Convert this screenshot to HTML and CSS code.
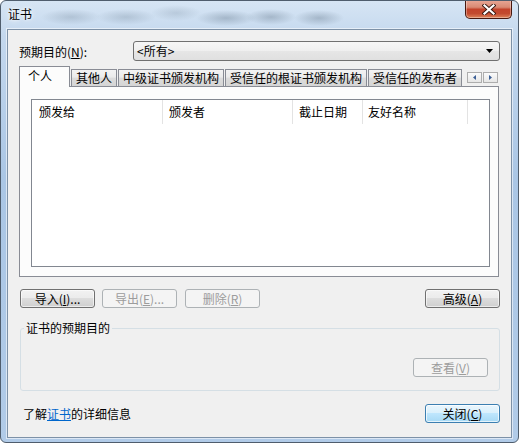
FILE: index.html
```html
<!DOCTYPE html>
<html lang="zh-CN">
<head>
    <meta charset="UTF-8">
    <title>证书</title>
    <link rel="stylesheet" href="styles.css">
</head>
<body>

<div class="window">
    <div class="titlebar">
        <span class="title">证书</span>
        <div class="close-btn">
            <svg width="14" height="11" viewBox="0 0 14 11">
                <path d="M2.5 1.5 L11.5 9.5 M11.5 1.5 L2.5 9.5" stroke="#3b1a12" stroke-width="4" stroke-linecap="square"/>
                <path d="M2.5 1.5 L11.5 9.5 M11.5 1.5 L2.5 9.5" stroke="#fff" stroke-width="2.2" stroke-linecap="square"/>
            </svg>
        </div>
    </div>

    <div class="client">
        <div class="purpose-row">
            <span class="purpose-label">预期目的(<u>N</u>):</span>
            <div class="combo">
                <span>&lt;所有&gt;</span>
                <svg width="7" height="4" viewBox="0 0 7 4"><path d="M0 0 H7 L3.5 4 Z" fill="#000"/></svg>
            </div>
        </div>

        <div class="tabs">
            <div class="tab active">个人</div>
            <div class="tab">其他人</div>
            <div class="tab">中级证书颁发机构</div>
            <div class="tab">受信任的根证书颁发机构</div>
            <div class="tab">受信任的发布者</div>
            <div class="tab-scroll">
                <span class="scroll-btn"><svg width="3" height="5" viewBox="0 0 3 5"><path d="M3 0 V5 L0 2.5 Z" fill="#3c5f95"/></svg></span>
                <span class="scroll-btn"><svg width="3" height="5" viewBox="0 0 3 5"><path d="M0 0 V5 L3 2.5 Z" fill="#3c5f95"/></svg></span>
            </div>
        </div>

        <div class="tab-panel">
            <div class="listview">
                <div class="lv-header">
                    <div class="col col-to">颁发给</div>
                    <div class="col col-by">颁发者</div>
                    <div class="col col-date">截止日期</div>
                    <div class="col col-name">友好名称</div>
                </div>
            </div>
        </div>

        <div class="button-row">
            <button class="btn">导入(<u>I</u>)...</button>
            <button class="btn" disabled>导出(<u>E</u>)...</button>
            <button class="btn" disabled>删除(<u>R</u>)</button>
            <button class="btn advanced">高级(<u>A</u>)</button>
        </div>

        <fieldset class="group">
            <legend>证书的预期目的</legend>
            <div class="group-body">
                <button class="btn" disabled>查看(<u>V</u>)</button>
            </div>
        </fieldset>

        <div class="footer">
            <span class="info">了解<a href="#" class="link">证书</a>的详细信息</span>
            <button class="btn default">关闭(<u>C</u>)</button>
        </div>
    </div>
</div>

</body>
</html>
```

FILE: styles.css
```css
* { box-sizing: border-box; }
body {
    margin: 0;
    font-family: "Noto Sans CJK SC", "Liberation Sans", sans-serif;
    font-size: 12px;
    color: #000;
}

/* window frame */
.window {
    width: 519px;
    height: 443px;
    border: 1px solid #4f5d6d;
    border-radius: 6px;
    overflow: hidden;
    display: flex;
    flex-direction: column;
    background:
        radial-gradient(ellipse 30px 8px at 70px 16px, rgba(90,110,130,0.25), transparent),
        radial-gradient(ellipse 30px 8px at 125px 16px, rgba(90,110,130,0.25), transparent),
        radial-gradient(ellipse 25px 8px at 175px 12px, rgba(90,110,130,0.2), transparent),
        radial-gradient(ellipse 30px 8px at 225px 17px, rgba(70,90,110,0.3), transparent),
        radial-gradient(ellipse 25px 8px at 270px 16px, rgba(70,90,110,0.3), transparent),
        radial-gradient(ellipse 25px 8px at 318px 17px, rgba(70,90,110,0.3), transparent),
        linear-gradient(180deg, #d6e5f4 0%, #c4d8ee 8%, #aac6e5 40%, #b1cbe8 100%);
}
.titlebar {
    height: 28px;
    display: flex;
    justify-content: space-between;
    align-items: flex-start;
}
.title {
    margin: 6px 0 0 7px;
    line-height: 14px;
    text-shadow: 0 0 6px #fff, 0 0 3px #fff;
}
.close-btn {
    width: 47px;
    height: 19px;
    margin: -1px 6px 0 0;
    border: 1px solid #47180f;
    border-top: none;
    border-radius: 0 0 5px 5px;
    display: flex;
    align-items: center;
    justify-content: center;
    background: linear-gradient(180deg, #e9a897 0%, #d98a74 40%, #c3432b 52%, #c24a2f 75%, #de8359 100%);
    box-shadow: inset 0 0 0 1px rgba(255,255,255,0.35);
}

/* client area */
.client {
    height: 409px;
    margin: 0 6px;
    border: 1px solid #7d91a7;
    box-shadow: 0 0 0 1px rgba(255,255,255,0.55);
    background: #f0f0f0;
    padding: 11px 11px 14px 11px;
}

.purpose-row {
    display: flex;
    align-items: center;
    height: 20px;
}
.purpose-label {
    width: 114px;
    line-height: 14px;
    padding-top: 2px;
}
.combo {
    flex: 1;
    height: 20px;
    border: 1px solid #707070;
    border-radius: 3px;
    display: flex;
    align-items: center;
    justify-content: space-between;
    padding: 0 6px 0 3px;
    line-height: 14px;
    background: linear-gradient(180deg, #f6f6f6 0%, #efefef 50%, #e6e6e6 51%, #e0e0e0 100%);
}

/* tabs */
.tabs {
    display: flex;
    align-items: flex-end;
    height: 20px;
    margin-top: 5px;
}
.tab {
    height: 17px;
    padding: 0 4px;
    margin-right: 1px;
    border: 1px solid #898c95;
    border-bottom: none;
    line-height: 16px;
    white-space: nowrap;
    background: linear-gradient(180deg, #f3f3f3 0%, #ebebeb 45%, #dcdcdc 50%, #d5d5d5 100%);
}
.tab.active {
    width: 51px;
    height: 21px;
    margin-bottom: -1px;
    padding: 0 0 0 8px;
    line-height: 17px;
    background: #fcfcfc;
    position: relative;
    z-index: 1;
}
.tab-scroll {
    display: flex;
    gap: 1px;
    margin: 6px 2px 0 auto;
    align-self: flex-start;
}
.scroll-btn {
    width: 15px;
    height: 11px;
    border: 1px solid #adadad;
    display: flex;
    align-items: center;
    justify-content: center;
    background: linear-gradient(180deg, #fbfbfb, #e6e6e6);
}

.tab-panel {
    height: 191px;
    margin-right: 1px;
    border: 1px solid #898c95;
    background: #fcfcfc;
    padding: 12px 8px 9px 11px;
}
.listview {
    height: 168px;
    border: 1px solid #828790;
    background: #fff;
}
.lv-header {
    display: flex;
    height: 24px;
}
.col {
    border-right: 1px solid #e3e3e3;
    padding-left: 6px;
    line-height: 24px;
    white-space: nowrap;
}
.col-to { width: 131px; padding-left: 7px; }
.col-by { width: 130px; }
.col-date { width: 70px; }
.col-name { width: 105px; padding-left: 5px; }

/* buttons */
.btn {
    width: 75px;
    height: 19px;
    padding: 0;
    font: inherit;
    line-height: 14px;
    color: #000;
    border: 1px solid #707070;
    border-radius: 3px;
    background: linear-gradient(180deg, #f2f2f2 0%, #ebebeb 49%, #dddddd 50%, #cfcfcf 100%);
    box-shadow: inset 0 0 0 1px rgba(255,255,255,0.6);
}
.btn:disabled {
    color: #9c9c9c;
    border-color: #adb2b5;
    background: #f4f4f4;
    box-shadow: none;
}
.btn.default {
    border-color: #3c7fb1;
    background: linear-gradient(180deg, #eaf6fd 0%, #d9f0fc 49%, #bee6fd 50%, #a7d9f5 100%);
    box-shadow: inset 0 0 0 1px rgba(255,255,255,0.7);
}

.button-row {
    display: flex;
    margin-top: 12px;
    padding-left: 1px;
}
.button-row .btn { margin-right: 7px; }
.button-row .btn:nth-child(2) { margin-right: 8px; }
.button-row .advanced { margin: 0 0 0 auto; }

/* group box */
.group {
    margin: 13px 0 0 1px;
    padding: 0;
    min-width: 0;
    border: 1px solid #d5dfe5;
    border-radius: 3px;
}
.group legend {
    margin-left: 3px;
    padding: 0 2px;
    line-height: 14px;
}
.group-body {
    height: 55px;
    display: flex;
    justify-content: flex-end;
    align-items: flex-start;
    padding: 23px 11px 0 0;
}

.footer {
    display: flex;
    justify-content: space-between;
    align-items: center;
    margin-top: 13px;
}
.info {
    margin-left: 4px;
    line-height: 14px;
}
.link {
    color: #0066cc;
}
```
